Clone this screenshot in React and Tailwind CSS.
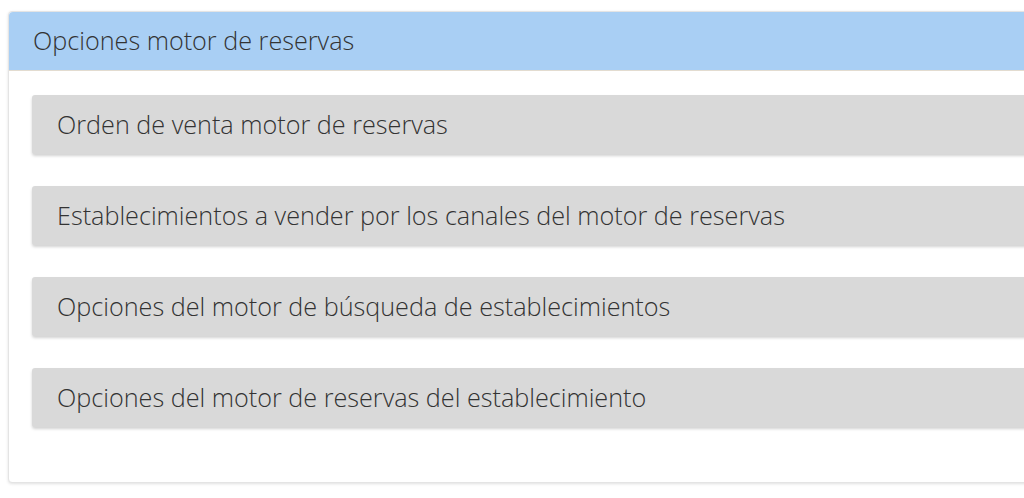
const items = [
  'Orden de venta motor de reservas',
  'Establecimientos a vender por los canales del motor de reservas',
  'Opciones del motor de búsqueda de establecimientos',
  'Opciones del motor de reservas del establecimiento',
];

export default function App() {
  return (
    <div className="w-[1024px] h-[498px] overflow-hidden bg-white pt-[11px] pl-2 font-['Open_Sans',sans-serif] font-light text-[#333333]">
      <div className="w-[1100px] bg-white rounded-[4px] border border-[#e4e4e4] shadow-[0_1px_3px_rgba(0,0,0,0.12)]">
        <div className="h-[59px] flex items-center pl-[24px] bg-[#a9cff4] border-b border-[#e3dcd0] rounded-t-[4px]">
          <span className="text-[25.2px]">Opciones motor de reservas</span>
        </div>
        <div className="flex flex-col gap-[32px] pt-[24px] pb-[55px] pl-[23px]">
          {items.map((label) => (
            <div
              key={label}
              className="h-[59px] flex items-center pl-[25px] bg-[#d9d9d9] rounded-[3px] shadow-[0_2px_3px_rgba(0,0,0,0.18)]"
            >
              <span className="text-[25.2px]">{label}</span>
            </div>
          ))}
        </div>
      </div>
    </div>
  );
}
